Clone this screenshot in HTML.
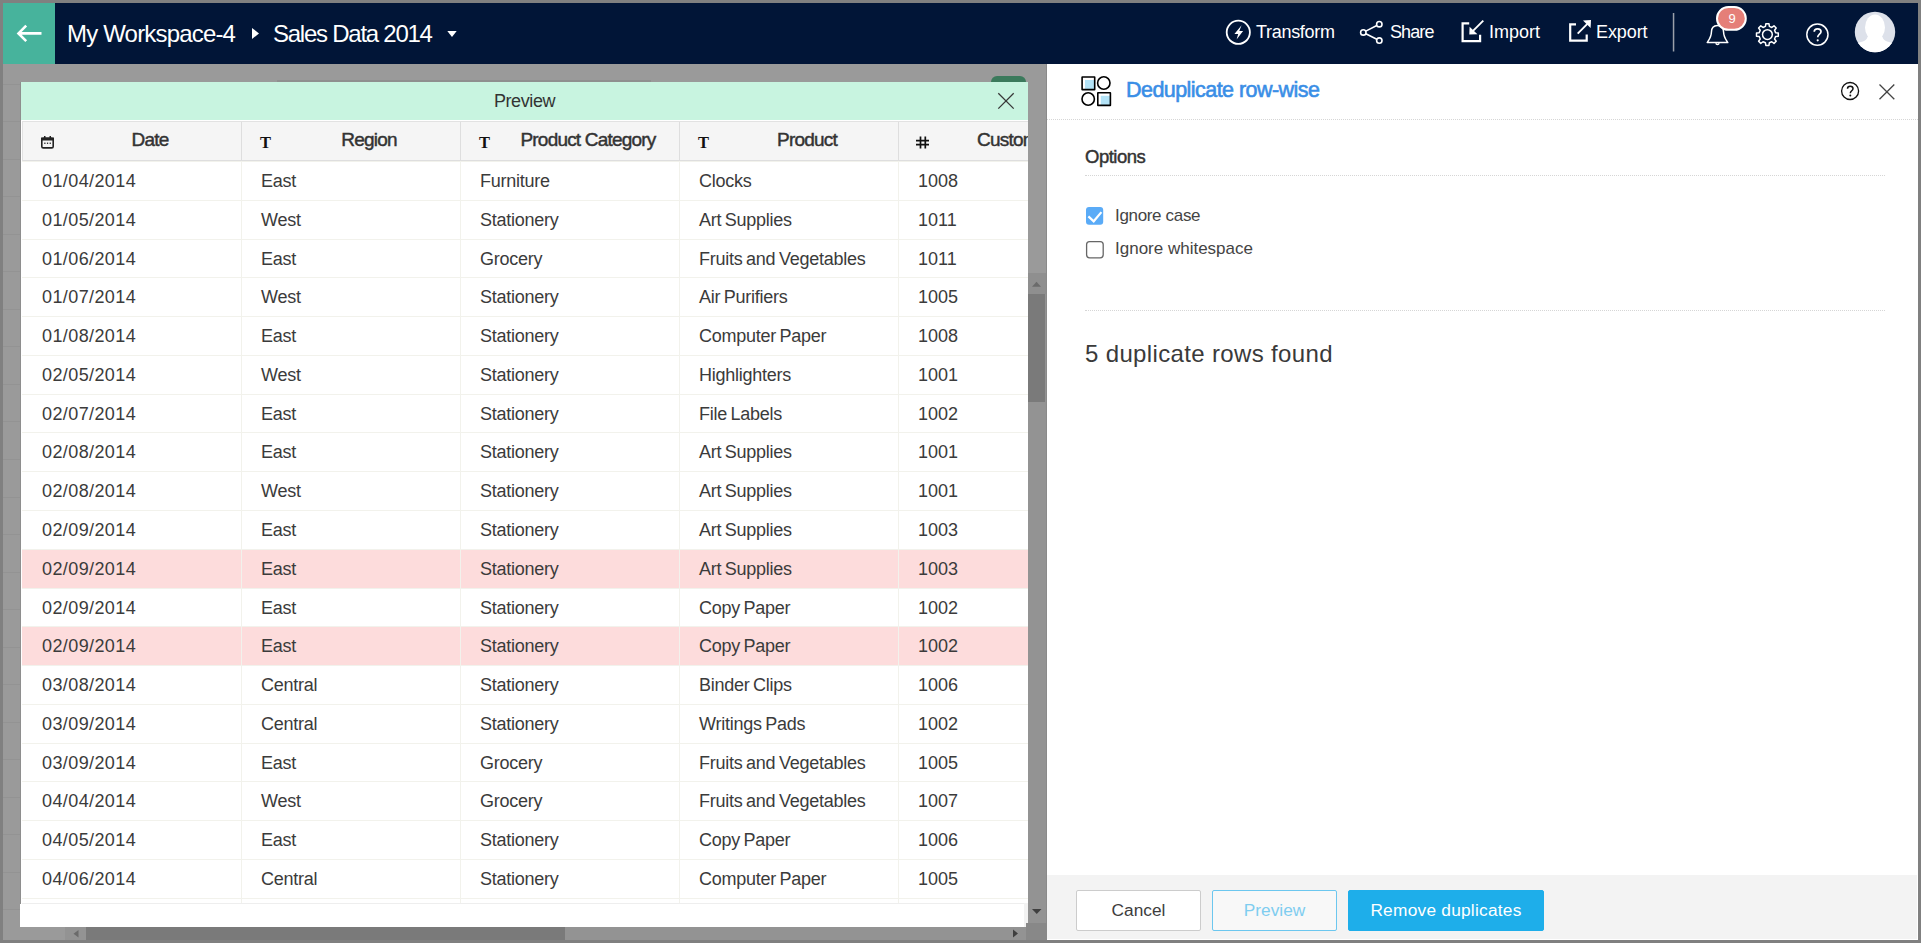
<!DOCTYPE html>
<html><head><meta charset="utf-8">
<style>
*{box-sizing:border-box;margin:0;padding:0}
html,body{width:1921px;height:943px;overflow:hidden;background:#808080;font-family:"Liberation Sans",sans-serif;position:relative}
.a{position:absolute}
.nw{white-space:nowrap}
#bg{left:3px;top:64px;width:1915px;height:876px;background:#9a9a9a}
#hdr{left:3px;top:3px;width:1915px;height:61px;background:#011537}
#back{left:3px;top:3px;width:52px;height:61px;background:#47b39c}
.ht{font-size:23px;color:#fff;white-space:nowrap;line-height:1}
.hb{font-size:18px;color:#fff;white-space:nowrap;line-height:1}
#mint{left:21px;top:82px;width:1007px;height:38px;background:#c8f4e0}
#mtitle{left:21px;top:82px;width:1007px;height:38px;color:#333;font-size:18px;text-align:center;line-height:38px;letter-spacing:-0.4px}
#tclip{left:22px;top:121px;width:1006px;height:782px;overflow:hidden;background:#fff}
.hrow{position:absolute;left:0;top:0;height:40px;width:1100px;background:#f5f5f5;border-top:1px solid #e2e2e2;border-bottom:1px solid #dedede;border-left:1px solid #e2e2e2}
.hc{position:absolute;top:0;height:39px;width:219px;border-right:1px solid #dedede;font-size:18px;color:#333;font-weight:bold}
.hc span{position:absolute;top:-2px;line-height:39px;white-space:nowrap;font-size:19px;letter-spacing:-0.8px;font-weight:normal;-webkit-text-stroke:0.45px #333}
.row{position:absolute;left:0;width:1100px;height:38.78px;background:#fff}
.row.dup{background:#fddcdc}
.c{position:absolute;top:0;height:100%;width:220px;border-right:1px solid #f2f2ec;border-top:1px solid #f2f2ec;font-size:18px;color:#3b3b3b;padding-left:20px;line-height:39px;white-space:nowrap;letter-spacing:-0.25px;word-spacing:-1.2px}
.c.d{letter-spacing:0.4px}
.c.n{letter-spacing:0}
#panel{left:1047px;top:64px;width:871px;height:876px;background:#fff}
#footer{left:1047px;top:875px;width:871px;height:65px;background:#f3f3f3}
.btn{position:absolute;top:890px;height:41px;font-size:17.3px;text-align:center;line-height:39px;border:1px solid #ccc;border-radius:2px;white-space:nowrap}
.dot{border-top:1px dotted #d6d6d6;height:0}

</style></head>
<body>
<div class="a" id="bg"></div>
<div class="a" style="left:3px;top:64px;width:17px;height:876px;background:repeating-linear-gradient(to bottom, transparent 0, transparent 19.7px, #939393 19.7px, #939393 20.7px, transparent 20.7px, transparent 37.53px)"></div>
<div class="a" style="left:277px;top:80px;width:374px;height:2px;background:#8f8f8f"></div>
<div class="a" style="left:991px;top:76px;width:35px;height:12px;border-radius:6px 6px 0 0;background:#3b7a5c"></div>
<div class="a" id="hdr"></div>
<div class="a" id="back"></div>
<svg class="a" style="left:0;top:0" width="1921" height="64" viewBox="0 0 1921 64">
  <g fill="none" stroke="#fff" stroke-width="2.6">
    <path d="M41.5 33.4 H18.5 M26.2 25.7 L18.5 33.4 L26.2 41.1"/>
  </g>
  <path d="M252 28 L259 33.4 L252 39 Z" fill="#fff"/>
  <path d="M447.3 31 L456.7 31 L452 37 Z" fill="#fff"/>
</svg>
<svg class="a" style="left:0;top:0" width="1921" height="64" viewBox="0 0 1921 64">
 <g fill="none" stroke="#fff" stroke-width="1.8">
  <circle cx="1238.3" cy="32.3" r="11.6"/>
 </g>
 <path d="M1241.6 25.2 L1234.4 34.1 L1238.2 33.9 L1236.6 39.5 L1243.1 30.9 L1239.3 31.1 Z" fill="#fff"/>
 <g fill="none" stroke="#fff" stroke-width="1.6">
  <circle cx="1363.3" cy="32.4" r="2.7"/>
  <circle cx="1379.3" cy="24.2" r="2.7"/>
  <circle cx="1379.3" cy="40.6" r="2.7"/>
  <path d="M1365.8 31.1 L1376.8 25.5 M1365.8 33.7 L1376.8 39.3"/>
 </g>
 <g fill="none" stroke="#fff" stroke-width="2.2">
  <path d="M1469.2 23.3 H1462.6 V41.1 H1480.1 V34.8"/>
  <path d="M1572 24.3 H1570.2 V40.7 H1586.7 V34.6 M1576 24.3 H1570.2"/>
 </g>
 <g fill="none" stroke="#fff" stroke-width="1.9">
  <path d="M1483.3 20.6 L1472.5 31.4"/>
  <path d="M1577.7 33.6 L1587.6 23.7"/>
 </g>
 <path d="M1469.3 34.6 L1469.6 26.8 L1477.4 34.3 Z" fill="#fff"/>
 <path d="M1591 20 L1583 20.4 L1590.6 28 Z" fill="#fff"/>
 <rect x="1672.8" y="13" width="1.5" height="38.5" fill="#9aa0aa"/>
 <g fill="none" stroke="#fff" stroke-width="1.5" stroke-linejoin="round">
  <path d="M1707.2 42.6 C1709.8 38.5 1711.4 36.5 1711.4 32.2 C1711.4 27.6 1714.2 25.4 1717.5 25.4 C1720.8 25.4 1723.6 27.6 1723.6 32.2 C1723.6 36.5 1725.2 38.5 1727.8 42.6 Z"/>
  <path d="M1715.8 43.2 A1.8 1.8 0 0 0 1719.2 43.2"/>
 </g>
 <rect x="1717" y="7" width="28.8" height="22.8" rx="11.4" fill="#e57f78" stroke="#fff" stroke-width="2"/>
 <g fill="none" stroke="#fff" stroke-width="1.5" stroke-linejoin="round">
  <path d="M1775.57 32.64 L1778.29 33.05 L1778.29 36.15 L1775.57 36.56 L1774.56 38.99 L1776.20 41.20 L1774.00 43.40 L1771.79 41.76 L1769.36 42.77 L1768.95 45.49 L1765.85 45.49 L1765.44 42.77 L1763.01 41.76 L1760.80 43.40 L1758.60 41.20 L1760.24 38.99 L1759.23 36.56 L1756.51 36.15 L1756.51 33.05 L1759.23 32.64 L1760.24 30.21 L1758.60 28.00 L1760.80 25.80 L1763.01 27.44 L1765.44 26.43 L1765.85 23.71 L1768.95 23.71 L1769.36 26.43 L1771.79 27.44 L1774.00 25.80 L1776.20 28.00 L1774.56 30.21 Z"/>
  <circle cx="1767.4" cy="34.6" r="4.9"/>
  <circle cx="1817.4" cy="34.6" r="10.6"/>
 </g>
 <defs><clipPath id="avc"><circle cx="1875" cy="32" r="20.2"/></clipPath></defs>
 <circle cx="1875" cy="32" r="20.2" fill="#dde1ea"/>
 <g fill="#fff" clip-path="url(#avc)">
  <ellipse cx="1875" cy="27.5" rx="10" ry="13"/>
  <path d="M1853 45 C1860 41.5 1866.5 42 1867.5 37 L1882.5 37 C1883.5 42 1890 41.5 1897 45 L1897 54 L1853 54 Z"/>
 </g>
</svg>
<div class="a" style="left:1717px;top:7px;width:30px;height:23px;color:#fff;font-size:13px;line-height:23px;text-align:center">9</div>
<svg class="a" style="left:1800px;top:20px" width="36" height="30" viewBox="1800 20 36 30"><path d="M1814.2 31.8 C1814.2 29.7 1815.7 28.8 1817.6 28.8 C1819.6 28.8 1821 30 1821 31.7 C1821 34 1817.7 34.4 1817.7 37.3" fill="none" stroke="#fff" stroke-width="1.7"/><circle cx="1817.7" cy="40.3" r="1.1" fill="#fff"/></svg>
<div class="a ht" style="left:67px;top:22px;font-size:24px;letter-spacing:-0.82px">My Workspace-4</div>
<div class="a ht" style="left:273px;top:22px;font-size:24px;letter-spacing:-1.25px">Sales Data 2014</div>
<div class="a hb" style="left:1256px;top:23px;letter-spacing:-0.3px">Transform</div>
<div class="a hb" style="left:1390px;top:23px;letter-spacing:-0.9px">Share</div>
<div class="a hb" style="left:1489px;top:23px">Import</div>
<div class="a hb" style="left:1596px;top:23px;letter-spacing:-0.1px">Export</div>

<div class="a" style="left:20px;top:82px;width:1px;height:845px;background:#8e8e8e"></div>
<div class="a" style="left:21px;top:120px;width:1007px;height:807px;background:#fff"></div>
<div class="a" id="mint"></div>
<div class="a" id="mtitle">Preview</div>
<svg class="a" style="left:990px;top:82px" width="40" height="38" viewBox="990 82 40 38">
 <path d="M998.3 93.2 L1013.7 108.6 M1013.7 93.2 L998.3 108.6" fill="none" stroke="#383838" stroke-width="1.3"/>
</svg>
<div class="a" id="tclip">
<div class="hrow">
 <div class="hc" style="left:0"><span style="left:0;width:220px;padding-left:34px;text-align:center;">Date</span></div>
 <div class="hc" style="left:219px"><span style="left:0;width:220px;padding-left:34px;text-align:center;">Region</span></div>
 <div class="hc" style="left:438px"><span style="left:0;width:220px;padding-left:34px;text-align:center;">Product Category</span></div>
 <div class="hc" style="left:657px"><span style="left:0;width:220px;padding-left:34px;text-align:center;">Product</span></div>
 <div class="hc" style="left:876px"><span style="left:0;width:220px;padding-left:34px;text-align:center;">Customer ID</span></div>
</div>
<div class="row" style="top:40.00px"><div class="c d" style="left:0px">01/04/2014</div><div class="c" style="left:219px">East</div><div class="c" style="left:438px">Furniture</div><div class="c" style="left:657px">Clocks</div><div class="c n" style="left:876px">1008</div></div>
<div class="row" style="top:78.78px"><div class="c d" style="left:0px">01/05/2014</div><div class="c" style="left:219px">West</div><div class="c" style="left:438px">Stationery</div><div class="c" style="left:657px">Art Supplies</div><div class="c n" style="left:876px">1011</div></div>
<div class="row" style="top:117.56px"><div class="c d" style="left:0px">01/06/2014</div><div class="c" style="left:219px">East</div><div class="c" style="left:438px">Grocery</div><div class="c" style="left:657px">Fruits and Vegetables</div><div class="c n" style="left:876px">1011</div></div>
<div class="row" style="top:156.34px"><div class="c d" style="left:0px">01/07/2014</div><div class="c" style="left:219px">West</div><div class="c" style="left:438px">Stationery</div><div class="c" style="left:657px">Air Purifiers</div><div class="c n" style="left:876px">1005</div></div>
<div class="row" style="top:195.12px"><div class="c d" style="left:0px">01/08/2014</div><div class="c" style="left:219px">East</div><div class="c" style="left:438px">Stationery</div><div class="c" style="left:657px">Computer Paper</div><div class="c n" style="left:876px">1008</div></div>
<div class="row" style="top:233.90px"><div class="c d" style="left:0px">02/05/2014</div><div class="c" style="left:219px">West</div><div class="c" style="left:438px">Stationery</div><div class="c" style="left:657px">Highlighters</div><div class="c n" style="left:876px">1001</div></div>
<div class="row" style="top:272.68px"><div class="c d" style="left:0px">02/07/2014</div><div class="c" style="left:219px">East</div><div class="c" style="left:438px">Stationery</div><div class="c" style="left:657px">File Labels</div><div class="c n" style="left:876px">1002</div></div>
<div class="row" style="top:311.46px"><div class="c d" style="left:0px">02/08/2014</div><div class="c" style="left:219px">East</div><div class="c" style="left:438px">Stationery</div><div class="c" style="left:657px">Art Supplies</div><div class="c n" style="left:876px">1001</div></div>
<div class="row" style="top:350.24px"><div class="c d" style="left:0px">02/08/2014</div><div class="c" style="left:219px">West</div><div class="c" style="left:438px">Stationery</div><div class="c" style="left:657px">Art Supplies</div><div class="c n" style="left:876px">1001</div></div>
<div class="row" style="top:389.02px"><div class="c d" style="left:0px">02/09/2014</div><div class="c" style="left:219px">East</div><div class="c" style="left:438px">Stationery</div><div class="c" style="left:657px">Art Supplies</div><div class="c n" style="left:876px">1003</div></div>
<div class="row dup" style="top:427.80px"><div class="c d" style="left:0px">02/09/2014</div><div class="c" style="left:219px">East</div><div class="c" style="left:438px">Stationery</div><div class="c" style="left:657px">Art Supplies</div><div class="c n" style="left:876px">1003</div></div>
<div class="row" style="top:466.58px"><div class="c d" style="left:0px">02/09/2014</div><div class="c" style="left:219px">East</div><div class="c" style="left:438px">Stationery</div><div class="c" style="left:657px">Copy Paper</div><div class="c n" style="left:876px">1002</div></div>
<div class="row dup" style="top:505.36px"><div class="c d" style="left:0px">02/09/2014</div><div class="c" style="left:219px">East</div><div class="c" style="left:438px">Stationery</div><div class="c" style="left:657px">Copy Paper</div><div class="c n" style="left:876px">1002</div></div>
<div class="row" style="top:544.14px"><div class="c d" style="left:0px">03/08/2014</div><div class="c" style="left:219px">Central</div><div class="c" style="left:438px">Stationery</div><div class="c" style="left:657px">Binder Clips</div><div class="c n" style="left:876px">1006</div></div>
<div class="row" style="top:582.92px"><div class="c d" style="left:0px">03/09/2014</div><div class="c" style="left:219px">Central</div><div class="c" style="left:438px">Stationery</div><div class="c" style="left:657px">Writings Pads</div><div class="c n" style="left:876px">1002</div></div>
<div class="row" style="top:621.70px"><div class="c d" style="left:0px">03/09/2014</div><div class="c" style="left:219px">East</div><div class="c" style="left:438px">Grocery</div><div class="c" style="left:657px">Fruits and Vegetables</div><div class="c n" style="left:876px">1005</div></div>
<div class="row" style="top:660.48px"><div class="c d" style="left:0px">04/04/2014</div><div class="c" style="left:219px">West</div><div class="c" style="left:438px">Grocery</div><div class="c" style="left:657px">Fruits and Vegetables</div><div class="c n" style="left:876px">1007</div></div>
<div class="row" style="top:699.26px"><div class="c d" style="left:0px">04/05/2014</div><div class="c" style="left:219px">East</div><div class="c" style="left:438px">Stationery</div><div class="c" style="left:657px">Copy Paper</div><div class="c n" style="left:876px">1006</div></div>
<div class="row" style="top:738.04px"><div class="c d" style="left:0px">04/06/2014</div><div class="c" style="left:219px">Central</div><div class="c" style="left:438px">Stationery</div><div class="c" style="left:657px">Computer Paper</div><div class="c n" style="left:876px">1005</div></div>
<div class="row" style="top:776.82px;height:6px"><div class="c" style="left:0px"></div><div class="c" style="left:219px"></div><div class="c" style="left:438px"></div><div class="c" style="left:657px"></div><div class="c" style="left:876px"></div></div>
<svg class="a" style="left:0;top:0" width="1006" height="40" viewBox="22 121 1006 40">
 <g fill="none" stroke="#222" stroke-width="1.6">
  <rect x="41.8" y="138.3" width="11.4" height="9.6" rx="1.5"/>
 </g>
 <g fill="#222">
  <rect x="41" y="137.5" width="13" height="3"/>
  <rect x="44" y="136" width="1.5" height="2.5"/><rect x="49.5" y="136" width="1.5" height="2.5"/>
  <rect x="44.2" y="142.6" width="1.3" height="1.3"/><rect x="46.9" y="142.6" width="1.3" height="1.3"/><rect x="49.6" y="142.6" width="1.3" height="1.3"/>
 </g>
 <g fill="none" stroke="#111" stroke-width="1.7">
  <path d="M920.5 136.5 V148.5 M925.3 136.5 V148.5 M916 140.7 H929 M916 144.6 H929"/>
 </g>
</svg>
<div class="a" style="left:238px;top:14px;font:bold 16.5px 'Liberation Serif',serif;color:#111;line-height:1">T</div>
<div class="a" style="left:457px;top:14px;font:bold 16.5px 'Liberation Serif',serif;color:#111;line-height:1">T</div>
<div class="a" style="left:676px;top:14px;font:bold 16.5px 'Liberation Serif',serif;color:#111;line-height:1">T</div>

</div>

<div class="a" style="left:22px;top:903px;width:1006px;height:1px;background:#eee"></div>
<div class="a" style="left:20px;top:904px;width:1004px;height:23px;background:#fff"></div>
<div class="a" style="left:1024px;top:903px;width:4px;height:24px;background:#f2f2f2"></div>
<div class="a" style="left:1028px;top:273px;width:19px;height:650px;background:#939393"></div>
<div class="a" style="left:1028px;top:273px;width:19px;height:21px;background:#8f8f8f"></div>
<div class="a" style="left:1046px;top:64px;width:1px;height:876px;background:#8a8a8a"></div>
<div class="a" style="left:1028px;top:294px;width:17px;height:108px;background:#7a7a7a"></div>
<div class="a" style="left:65px;top:927px;width:963px;height:13px;background:#939393"></div>
<div class="a" style="left:86px;top:927px;width:479px;height:13px;background:#7a7a7a"></div>
<div class="a" style="left:1026px;top:923px;width:21px;height:17px;background:#888"></div>
<svg class="a" style="left:0;top:260px" width="1921" height="683" viewBox="0 260 1921 683">
 <path d="M1032 286.8 L1041 286.8 L1036.5 281.8 Z" fill="#6b6b6b"/>
 <path d="M1032 909 L1041.5 909 L1036.75 914 Z" fill="#3f3f3f"/>
 <path d="M78.5 930 L78.5 937.5 L73.5 933.75 Z" fill="#6b6b6b"/>
 <path d="M1013 929.5 L1013 937.5 L1018 933.5 Z" fill="#3f3f3f"/>
</svg>
<div class="a" id="panel"></div>
<svg class="a" style="left:1047px;top:64px" width="871" height="250" viewBox="1047 64 871 250">
 <rect x="1085" y="80" width="9.5" height="9.5" fill="#b3e3f7"/>
 <rect x="1100.8" y="95.8" width="9.5" height="9.5" fill="#b3e3f7"/>
 <g fill="none" stroke="#000" stroke-width="1.6">
  <rect x="1082.1" y="77" width="12.6" height="12.6" rx="0.2"/>
  <circle cx="1103.8" cy="83" r="6.2"/>
  <circle cx="1088.2" cy="99" r="6.2"/>
  <rect x="1097.8" y="92.8" width="12.6" height="12.6" rx="0.2"/>
 </g>
 <g fill="none" stroke="#111" stroke-width="1.3">
  <circle cx="1850.1" cy="91" r="8.5"/>
 </g>
 <g fill="none" stroke="#444" stroke-width="1.3">
  <path d="M1879.5 84.5 L1894.3 99.3 M1894.3 84.5 L1879.5 99.3"/>
 </g>
 <rect x="1086" y="207" width="17.2" height="17.8" rx="3" fill="#5aabf7"/>
 <path d="M1088.4 216.4 L1093.7 221.3 L1101.4 212.1" fill="none" stroke="#fff" stroke-width="2.2"/>
 <rect x="1086.6" y="241.6" width="16.6" height="16.2" rx="3" fill="#fff" stroke="#666" stroke-width="1.3"/>
</svg>
<svg class="a" style="left:1838px;top:80px" width="24" height="22" viewBox="1838 80 24 22"><path d="M1847.5 88.8 C1847.5 87.1 1848.7 86.3 1850.2 86.3 C1851.8 86.3 1853 87.3 1853 88.7 C1853 90.6 1850.3 91 1850.3 93.2" fill="none" stroke="#111" stroke-width="1.5"/><circle cx="1850.3" cy="95.6" r="1" fill="#111"/></svg>
<div class="a nw" style="left:1126px;top:78px;font-size:21.5px;color:#3a8ee6;letter-spacing:-0.55px;-webkit-text-stroke:0.6px #3a8ee6">Deduplicate row-wise</div>
<div class="a dot" style="left:1047px;top:119px;width:871px"></div>
<div class="a nw" style="left:1085px;top:146px;font-size:18.5px;color:#333;letter-spacing:-0.5px;-webkit-text-stroke:0.45px #333">Options</div>
<div class="a dot" style="left:1085px;top:175px;width:800px"></div>
<div class="a nw" style="left:1115px;top:206px;font-size:17px;color:#444;letter-spacing:-0.33px">Ignore case</div>
<div class="a nw" style="left:1115px;top:239px;font-size:17px;color:#444;letter-spacing:0px">Ignore whitespace</div>
<div class="a dot" style="left:1085px;top:310px;width:800px"></div>
<div class="a nw" style="left:1085px;top:340px;font-size:24px;color:#3a3a3a;letter-spacing:0.35px">5 duplicate rows found</div>
<div class="a" id="footer"></div>
<div class="a" style="left:1917px;top:875px;width:1px;height:65px;background:#fff"></div>
<div class="a" style="left:1047px;top:939px;width:871px;height:1px;background:#fff"></div>
<div class="btn" style="left:1076px;width:125px;background:#fff;color:#3d3d3d">Cancel</div>
<div class="btn" style="left:1212px;width:125px;background:#f8f8f8;color:#7fcdf0;border-color:#6cc7ef">Preview</div>
<div class="btn" style="left:1348px;width:196px;background:#1eaeea;color:#fff;border-color:#1eaeea;letter-spacing:0.25px">Remove duplicates</div>

</body></html>
